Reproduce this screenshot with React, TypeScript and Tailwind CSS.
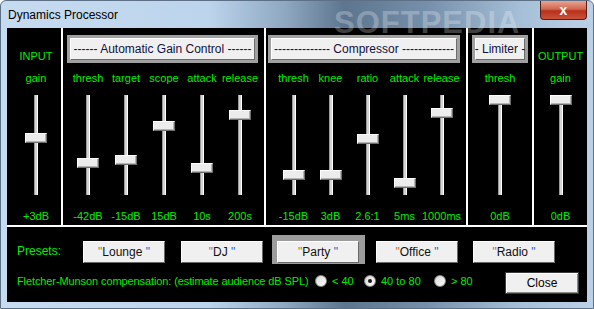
import React from 'react';

type Fader = { label: string; value: string; pos: number };

const agc: Fader[] = [
  { label: 'thresh', value: '-42dB', pos: 68 },
  { label: 'target', value: '-15dB', pos: 65 },
  { label: 'scope', value: '15dB', pos: 31 },
  { label: 'attack', value: '10s', pos: 73 },
  { label: 'release', value: '200s', pos: 20 },
];

const comp: Fader[] = [
  { label: 'thresh', value: '-15dB', pos: 80 },
  { label: 'knee', value: '3dB', pos: 80 },
  { label: 'ratio', value: '2.6:1', pos: 44 },
  { label: 'attack', value: '5ms', pos: 88 },
  { label: 'release', value: '1000ms', pos: 18 },
];

function Slider({ pos }: { pos: number }) {
  return (
    <div className="relative mt-[10px] h-[100px] w-[22px]">
      <div className="absolute left-[9px] top-0 h-full w-[4px] border-x border-l-[#9a9a9a] border-r-white bg-[#d4d4d4]" />
      <div
        className="absolute left-0 h-[10px] w-[22px] border border-t-white border-l-white border-r-[#6d6d6d] border-b-[#6d6d6d] bg-[#ececec] shadow-[inset_-1px_-1px_0_#b4b4b4]"
        style={{ top: pos - 5 }}
      />
    </div>
  );
}

function Column({ f, w }: { f: Fader; w: string }) {
  return (
    <div className={`flex flex-col items-center whitespace-nowrap ${w}`}>
      <div className="mt-[8px] leading-[14px]">{f.label}</div>
      <Slider pos={f.pos} />
      <div className="mt-[14px] leading-[14px]">{f.value}</div>
    </div>
  );
}

function Header({ text, className }: { text: string; className: string }) {
  return (
    <div className={`h-[28px] bg-[#a0a0a0] p-[3px] ${className}`}>
      <div className="flex h-full items-center justify-center whitespace-nowrap border border-t-white border-l-white border-r-[#6d6d6d] border-b-[#6d6d6d] bg-[#f0f0f0] text-[12px] text-[#12123a]">
        {text}
      </div>
    </div>
  );
}

function PresetButton({ name }: { name: string }) {
  return (
    <div className="flex h-[22px] w-[82px] items-center justify-center border border-t-white border-l-white border-r-[#696969] border-b-[#696969] bg-[#f0f0f0] text-[12px] text-[#111]">
      <span className="text-[#c46a1c]">"</span>
      {name}&nbsp;
      <span className="text-[#2a5fd0]">"</span>
    </div>
  );
}

function Radio({ label, checked, w }: { label: string; checked?: boolean; w: string }) {
  return (
    <div className={`flex items-center gap-[5px] ${w}`}>
      <div className="flex h-[12px] w-[12px] items-center justify-center rounded-full border border-[#8a8a8a] bg-[linear-gradient(135deg,#d8d8d8,#ffffff)]">
        {checked && <div className="h-[4px] w-[4px] rounded-full bg-[#1a1a1a]" />}
      </div>
      <span>{label}</span>
    </div>
  );
}

export default function App() {
  return (
    <div className="relative h-[309px] w-[594px] overflow-hidden rounded-t-[6px] border border-[#5d7086] bg-[linear-gradient(90deg,#c6dbf0_0%,#bcd4ec_35%,#8fa8c2_48%,#5d758e_58%,#7690ab_72%,#a7c0d9_88%,#bad1e8_100%)] font-['Liberation_Sans',sans-serif]">
      {/* title bar */}
      <div className="flex h-[27px] items-start justify-between">
        <div className="pl-[7px] pt-[7px] text-[12px] leading-[15px] text-black">Dynamics Processor</div>
        <div className="mr-[6px] flex h-[19px] w-[47px] items-center justify-center rounded-b-[4px] border border-t-0 border-[#5a1d12] bg-[linear-gradient(180deg,#e7a493_0%,#d3674f_45%,#b8301a_55%,#c9523a_100%)] text-[14px] font-bold leading-none text-white">
          x
        </div>
      </div>

      {/* client area */}
      <div className="mx-[6px] flex h-[274px] flex-col bg-black text-[11px] text-[#00ee00]">
        <div className="flex h-[199px] border-b-2 border-white">
          <div className="flex w-[54px] flex-col items-center pt-[7px] pl-[4px]">
            <div className="flex h-[28px] items-end leading-[14px]">INPUT</div>
            <Column f={{ label: 'gain', value: '+3dB', pos: 43 }} w="w-[40px]" />
          </div>

          <div className="w-[203px] border-l-2 border-white pt-[7px]">
            <Header text="------ Automatic Gain Control ------" className="ml-[4px] w-[191px]" />
            <div className="flex pl-[6px]">
              {agc.map((f) => (
                <Column key={f.label} f={f} w="w-[38px]" />
              ))}
            </div>
          </div>

          <div className="w-[202px] border-l-2 border-white pt-[7px]">
            <Header text="-------------- Compressor -------------" className="ml-[2px] w-[192px]" />
            <div className="flex pl-[9px]">
              {comp.map((f) => (
                <Column key={f.label + f.value} f={f} w="w-[37px]" />
              ))}
            </div>
          </div>

          <div className="flex w-[66px] flex-col border-l-2 border-white pt-[7px]">
            <Header text="- Limiter -" className="ml-[4px] w-[56px]" />
            <Column f={{ label: 'thresh', value: '0dB', pos: 5 }} w="w-full" />
          </div>

          <div className="flex w-[55px] flex-col items-center border-l-2 border-white pt-[7px]">
            <div className="flex h-[28px] items-end leading-[14px]">OUTPUT</div>
            <Column f={{ label: 'gain', value: '0dB', pos: 5 }} w="w-full" />
          </div>
        </div>

        <div className="flex flex-col pl-[10px]">
          <div className="mt-[14px] flex h-[22px] items-start">
            <div className="w-[66px] pt-[3px] text-[12px] leading-[14px]">Presets:</div>
            <PresetButton name="Lounge" />
            <div className="ml-[16px]">
              <PresetButton name="DJ" />
            </div>
            <div className="ml-[9px] -mt-[6px] bg-[#9c9c9c] px-[5px] pt-[6px] pb-[1px]">
              <div className="w-[83px]">
                <PresetButton name="Party" />
              </div>
            </div>
            <div className="ml-[11px]">
              <PresetButton name="Office" />
            </div>
            <div className="ml-[15px]">
              <PresetButton name="Radio" />
            </div>
          </div>

          <div className="mt-[9px] flex h-[22px] items-center text-[11px]">
            <div className="w-[298px] -translate-y-[2px] whitespace-nowrap tracking-[-0.1px]">
              Fletcher-Munson compensation: (estimate audience dB SPL)
            </div>
            <div className="flex -translate-y-[2px]">
              <Radio label="< 40" w="w-[49px]" />
              <Radio label="40 to 80" checked w="w-[70px]" />
              <Radio label="> 80" w="w-[60px]" />
            </div>
            <div className="ml-auto mr-[8px] flex h-[22px] w-[74px] items-center justify-center border border-[#3c3c3c] bg-[#f0f0f0] text-[12px] text-black shadow-[inset_1px_1px_0_#ffffff,inset_-1px_-1px_0_#8a8a8a]">
              Close
            </div>
          </div>
        </div>
      </div>

      {/* watermark */}
      <div className="pointer-events-none absolute left-[333px] top-[-1px] text-[31px] font-bold tracking-[1px] text-white/25">
        SOFTPEDIA
      </div>
    </div>
  );
}
